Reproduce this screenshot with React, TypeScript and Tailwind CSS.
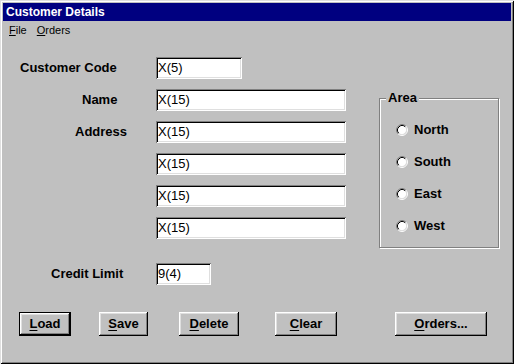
import React from "react";

const font = { fontFamily: '"Liberation Sans", Arial, sans-serif' };

function Field({ value, w }: { value: string; w: string }) {
  return (
    <div
      className={`${w} h-[22px] bg-white flex items-center pl-[2px] text-[13px] font-normal text-black shadow-[inset_1px_1px_#808080,inset_-1px_-1px_#fff,inset_2px_2px_#000,inset_-2px_-2px_#dfdfdf]`}
    >
      {value}
    </div>
  );
}

function Radio({ label }: { label: string }) {
  return (
    <div className="flex items-center h-[16px]">
      <svg width="12" height="12" viewBox="0 0 12 12">
        <circle cx="6" cy="6" r="4.5" fill="#fff" />
        <path d="M2.11 9.89 A5.5 5.5 0 0 1 9.89 2.11" stroke="#808080" fill="none" strokeWidth="1" />
        <path d="M9.89 2.11 A5.5 5.5 0 0 1 2.11 9.89" stroke="#fff" fill="none" strokeWidth="1" />
        <path d="M2.82 9.18 A4.5 4.5 0 0 1 9.18 2.82" stroke="#000" fill="none" strokeWidth="1" />
        <path d="M9.18 2.82 A4.5 4.5 0 0 1 2.82 9.18" stroke="#dfdfdf" fill="none" strokeWidth="1" />
      </svg>
      <span className="ml-[6px] text-[13px] font-bold text-black">{label}</span>
    </div>
  );
}

function Button({
  first,
  rest,
  w,
  ml,
  def,
}: {
  first: string;
  rest: string;
  w: string;
  ml: string;
  def?: boolean;
}) {
  return (
    <div
      className={`${w} ${ml} h-[24px] flex items-center justify-center text-[13px] font-bold text-black bg-[#c0c0c0] ${
        def
          ? "border border-black shadow-[inset_-1px_-1px_#000,inset_1px_1px_#fff,inset_-2px_-2px_#808080,inset_2px_2px_#dfdfdf]"
          : "shadow-[inset_-1px_-1px_#000,inset_1px_1px_#fff,inset_-2px_-2px_#808080,inset_2px_2px_#dfdfdf]"
      }`}
    >
      <span>
        <span className="underline underline-offset-2">{first}</span>
        {rest}
      </span>
    </div>
  );
}

export default function App() {
  return (
    <div
      style={font}
      className="w-[514px] h-[364px] bg-[#c0c0c0] flex flex-col shadow-[inset_1px_1px_#dfdfdf,inset_-1px_-1px_#000,inset_2px_2px_#fff,inset_-2px_-2px_#808080]"
    >
      <div className="mx-[3px] mt-[3px] h-[18px] bg-[#000080] flex items-center pl-[3px] text-white text-[12px] font-bold">
        Customer Details
      </div>
      <div className="h-[19px] flex items-center text-[11px] text-black">
        <span className="ml-[9px]">
          <span className="underline">F</span>ile
        </span>
        <span className="ml-[10px]">
          <span className="underline">O</span>rders
        </span>
      </div>
      <div className="flex mt-[17px]">
        <div className="w-[379px] flex flex-col gap-[10px] text-[13px] font-bold text-black">
          <div className="flex items-center">
            <div className="w-[156px] pl-[20px]">Customer Code</div>
            <Field value="X(5)" w="w-[86px]" />
          </div>
          <div className="flex items-center">
            <div className="w-[156px] pl-[82px]">Name</div>
            <Field value="X(15)" w="w-[190px]" />
          </div>
          <div className="flex items-center">
            <div className="w-[156px] pl-[75px]">Address</div>
            <Field value="X(15)" w="w-[190px]" />
          </div>
          <div className="flex items-center">
            <div className="w-[156px]" />
            <Field value="X(15)" w="w-[190px]" />
          </div>
          <div className="flex items-center">
            <div className="w-[156px]" />
            <Field value="X(15)" w="w-[190px]" />
          </div>
          <div className="flex items-center">
            <div className="w-[156px]" />
            <Field value="X(15)" w="w-[190px]" />
          </div>
          <div className="flex items-center mt-[14px]">
            <div className="w-[156px] pl-[51px]">Credit Limit</div>
            <Field value="9(4)" w="w-[55px]" />
          </div>
        </div>
        <div className="relative mt-[41px] w-[120px] h-[150px] border border-[#808080] shadow-[inset_1px_1px_#fff,1px_1px_#fff]">
          <div className="absolute left-[6px] top-[-9px] px-[2px] bg-[#c0c0c0] text-[13px] font-bold text-black leading-[16px]">
            Area
          </div>
          <div className="flex flex-col gap-[16px] pt-[23px] pl-[16px]">
            <Radio label="North" />
            <Radio label="South" />
            <Radio label="East" />
            <Radio label="West" />
          </div>
        </div>
      </div>
      <div className="flex mt-[27px]">
        <Button first="L" rest="oad" w="w-[52px]" ml="ml-[19px]" def />
        <Button first="S" rest="ave" w="w-[49px]" ml="ml-[28px]" />
        <Button first="D" rest="elete" w="w-[60px]" ml="ml-[31px]" />
        <Button first="C" rest="lear" w="w-[62px]" ml="ml-[36px]" />
        <Button first="O" rest="rders..." w="w-[92px]" ml="ml-[58px]" />
      </div>
    </div>
  );
}
